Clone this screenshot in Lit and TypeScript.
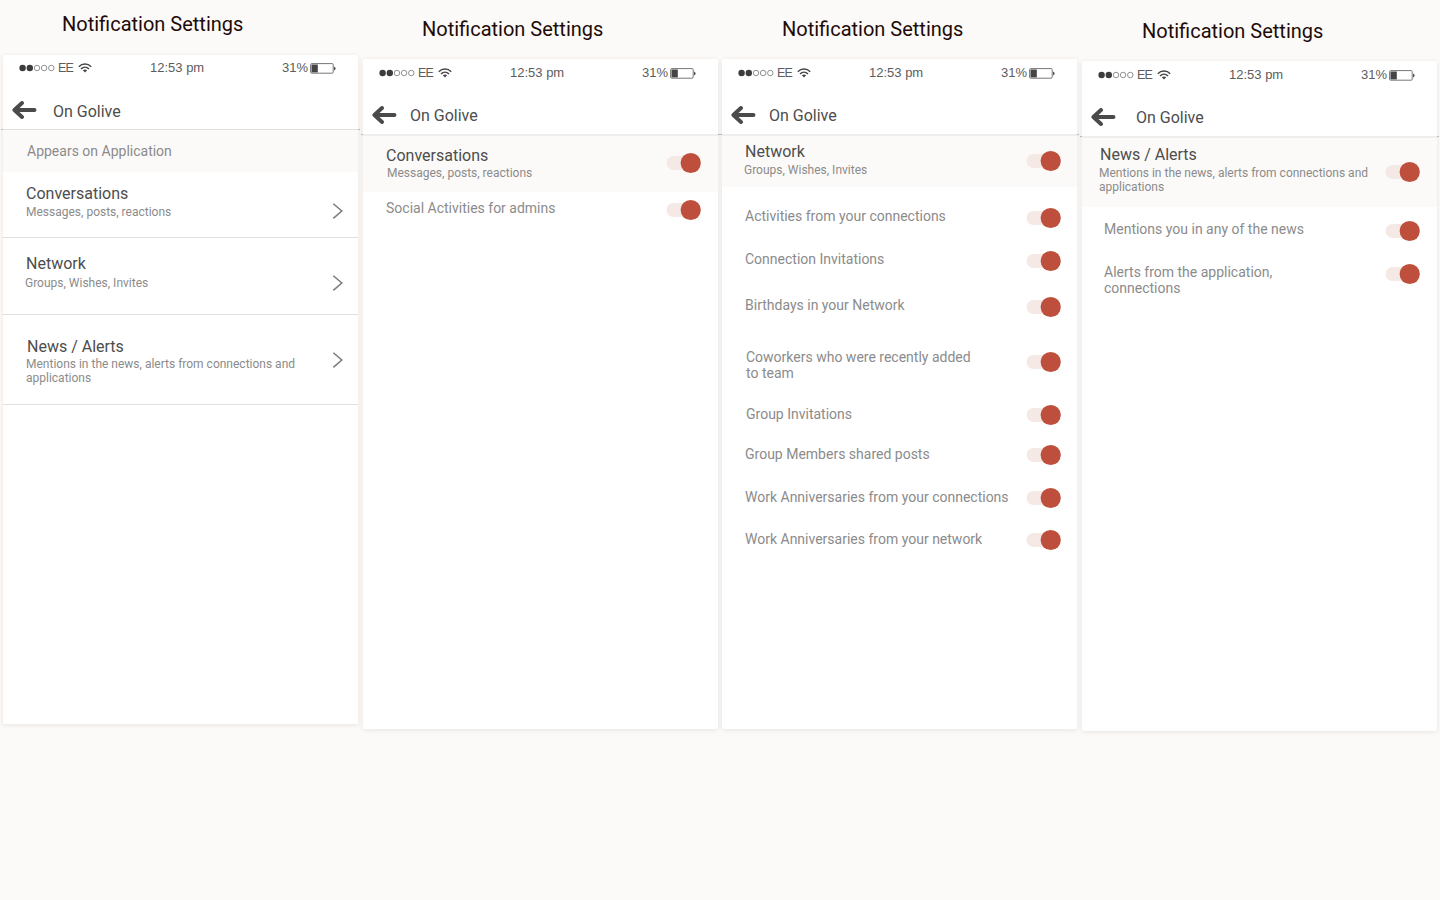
import { LitElement, html, css, svg, nothing } from "lit";
import { customElement, property } from "lit/decorators.js";
import { styleMap } from "lit/directives/style-map.js";
import { classMap } from "lit/directives/class-map.js";

interface Row {
  kind: "section" | "link" | "band" | "item";
  height: number;
  indent: number;
  top: number;
  label: string;
  sub?: string;
  subShift?: number;
  gap?: number;
  control?: number;
}

interface Screen {
  headTop: number;
  headGap: number;
  left: number;
  height: number;
  drop: number;
  rule: number;
  navIndent: number;
  controlRight: number;
  rows: Row[];
}

const SCREENS: Screen[] = [
  {
    headTop: 12, headGap: 19, left: 3, height: 669, drop: 0, rule: 1, navIndent: 50, controlRight: 15,
    rows: [
      { kind: "section", height: 42, indent: 24, top: 13, label: "Appears on Application" },
      { kind: "link", height: 66, indent: 23, top: 12, label: "Conversations", sub: "Messages, posts, reactions", subShift: 0, gap: 2, control: 39.4 },
      { kind: "link", height: 77, indent: 23, top: 16, label: "Network", sub: "Groups, Wishes, Invites", subShift: -1, gap: 3, control: 44.6 },
      { kind: "link", height: 90, indent: 24, top: 22, label: "News / Alerts", sub: "Mentions in the news, alerts from connections and\napplications", subShift: -1, gap: 1, control: 44.6 },
    ],
  },
  {
    headTop: 17, headGap: 18, left: 3, height: 670, drop: 1, rule: 2, navIndent: 47, controlRight: 17,
    rows: [
      { kind: "band", height: 56, indent: 23, top: 10, label: "Conversations", sub: "Messages, posts, reactions", subShift: 1, gap: 1, control: 27.4 },
      { kind: "item", height: 40, indent: 23, top: 8, label: "Social Activities for admins", control: 17.9 },
    ],
  },
  {
    headTop: 17, headGap: 18, left: 2, height: 670, drop: 1, rule: 2, navIndent: 47, controlRight: 16,
    rows: [
      { kind: "band", height: 51, indent: 23, top: 6, label: "Network", sub: "Groups, Wishes, Invites", subShift: -1, gap: 2, control: 25 },
      { kind: "item", height: 52, indent: 23, top: 21, label: "Activities from your connections", control: 30.6 },
      { kind: "item", height: 44, indent: 23, top: 12, label: "Connection Invitations", control: 21.6 },
      { kind: "item", height: 48, indent: 23, top: 14, label: "Birthdays in your Network", control: 23.7 },
      { kind: "item", height: 57, indent: 24, top: 18, label: "Coworkers who were recently added\nto team", control: 31 },
      { kind: "item", height: 46, indent: 24, top: 18, label: "Group Invitations", control: 26.9 },
      { kind: "item", height: 42, indent: 23, top: 12, label: "Group Members shared posts", control: 21 },
      { kind: "item", height: 42, indent: 23, top: 13, label: "Work Anniversaries from your connections", control: 22 },
      { kind: "item", height: 44, indent: 23, top: 13, label: "Work Anniversaries from your network", control: 22 },
    ],
  },
  {
    headTop: 19, headGap: 18, left: 2, height: 670, drop: 1, rule: 2, navIndent: 54, controlRight: 17,
    rows: [
      { kind: "band", height: 69, indent: 18, top: 7, label: "News / Alerts", sub: "Mentions in the news, alerts from connections and\napplications", subShift: -1, gap: 2, control: 34 },
      { kind: "item", height: 42, indent: 22, top: 14, label: "Mentions you in any of the news", control: 23.5 },
      { kind: "item", height: 51, indent: 22, top: 15, label: "Alerts from the application,\nconnections", control: 24.6 },
    ],
  },
];

const px = (n: number) => `${n}px`;

@customElement("status-bar")
class StatusBar extends LitElement {
  static styles = css`
    :host {
      display: grid;
      grid-template-columns: 131px 132px 1fr;
      padding-left: 16px;
      height: 18px;
      font: 13px/18px "Liberation Sans", Arial, sans-serif;
      color: #5c5c5c;
    }
    .cell { display: flex; align-items: center; white-space: nowrap; }
    svg { display: block; flex: none; }
    .dots { margin-right: 3px; }
    .carrier { font-size: 12.5px; letter-spacing: -0.8px; width: 19.5px; }
    .battery { margin-left: 2px; }
  `;

  render() {
    return html`
      <div class="cell">
        <svg class="dots" width="36" height="8" viewBox="0 0 36 8">
          <circle cx="3.6" cy="4" r="3.2" fill="#3c3c3c"></circle>
          <circle cx="10.8" cy="4" r="3.2" fill="#3c3c3c"></circle>
          ${[18, 25.1, 32.3].map((x) => svg`<circle cx=${x} cy="4" r="2.75" fill="none" stroke="#777" stroke-width=".8"></circle>`)}
        </svg>
        <span class="carrier">EE</span>
        <svg width="14" height="10" viewBox="0 0 14 10" fill="none" stroke="#484848" stroke-width="1.5">
          <path d="M.8 3.7C4.2.2 9.8.2 13.2 3.7"></path>
          <path d="M3 6C5.300 3.700 8.700 3.700 11 6"></path>
          <path d="M4.800 7.300Q7 5.500 9.200 7.300L7 9.600Z" fill="#484848" stroke="none"></path>
        </svg>
      </div>
      <div class="cell">12:53 pm</div>
      <div class="cell">
        31%
        <svg class="battery" width="26" height="11" viewBox="0 0 26 11">
          <rect x=".6" y=".6" width="22.600" height="9.600" rx="1" fill="none" stroke="#777" stroke-width="1"></rect>
          <rect x="1.500" y="1.500" width="6.300" height="7.900" fill="#444"></rect>
          <path d="M24 3.500Q25.600 4 25.600 5.500Q25.600 7 24 7.500Z" fill="#555"></path>
        </svg>
      </div>
    `;
  }
}

@customElement("phone-screen")
class PhoneScreen extends LitElement {
  @property({ attribute: false }) screen!: Screen;

  static styles = css`
    :host { display: block; }
    .heading { font-size: 20px; line-height: 24px; color: #210b08; white-space: nowrap; }
    .phone {
      width: 355px;
      background: #fff;
      border-radius: 2px;
      box-shadow: 0 1px 5px rgba(60, 40, 40, 0.11);
    }
    .top { height: 30px; box-sizing: border-box; }
    .nav { display: flex; padding-left: 9px; box-sizing: border-box; }
    .nav svg { display: block; flex: none; }
    .nav-title { padding-top: 17px; font-size: 16px; line-height: 19px; color: #4d4d4d; }
    .rule { display: flex; justify-content: space-between; margin: 0 -2px; background: #e2e1e0; }
    .rule.soft { background: #efeeed; }
    .rule i { width: 2px; height: 1px; background: #bdbbba; }
    .row { display: flex; box-sizing: border-box; }
    .text { flex: 1; white-space: pre; font-size: 14px; line-height: 16px; color: #8b8b8b; }
    .title { font-size: 16px; line-height: 19px; color: #4d4d4d; }
    .sub { font-size: 12px; line-height: 14px; color: #8b8b8b; }
    .section, .band { background: #fbfaf8; }
    .link { border-bottom: 1px solid #dfdfdf; }
    .control { flex: none; }
    .control svg { display: block; }
  `;

  private chevron = html`
    <svg width="11" height="22" viewBox="0 0 11 22"><path d="M1.300 3.700L9.800 11L1.300 18.400" fill="none" stroke="#7b7b7b" stroke-width="1.500"></path></svg>
  `;

  private toggle = html`
    <svg width="35" height="22" viewBox="0 0 35 22">
      <rect x=".5" y="4" width="32" height="14" rx="7" fill="#f5e9e6"></rect>
      <circle cx="24.700" cy="11" r="10.100" fill="#be4f3c"></circle>
    </svg>
  `;

  private row(r: Row) {
    const big = r.sub !== undefined;
    return html`
      <div class=${classMap({ row: true, [r.kind]: true })}
        style=${styleMap({ height: px(r.height), paddingLeft: px(r.indent), paddingRight: px(this.screen.controlRight) })}>
        <div class="text" style=${styleMap({ paddingTop: px(r.top) })}>${big
          ? html`<div class="title">${r.label}</div><div class="sub" style=${styleMap({ marginTop: px(r.gap ?? 0), marginLeft: px(r.subShift ?? 0) })}>${r.sub}</div>`
          : r.label}</div>
        ${r.control === undefined ? nothing : html`<div class="control" style=${styleMap({ paddingTop: px(r.control - 11) })}>${r.kind === "link" ? this.chevron : this.toggle}</div>`}
      </div>
    `;
  }

  render() {
    const s = this.screen;
    return html`
      <div class="heading" style=${styleMap({ padding: `${s.headTop}px 0 ${s.headGap}px 62px` })}>Notification Settings</div>
      <div class="phone" style=${styleMap({ height: px(s.height), marginLeft: px(s.left) })}>
        <div class="top" style=${styleMap({ paddingTop: px(4 + s.drop) })}><status-bar></status-bar></div>
        <div class="nav" style=${styleMap({ height: px(s.rule === 1 ? 44 : 45) })}>
          <svg style=${styleMap({ marginTop: px(15.8 + s.drop), width: px(s.navIndent - 9) })} height="18" viewBox="0 0 ${s.navIndent - 9} 18">
            <path d="M22.500 9H3.500M10 2L2.400 9L10 16" fill="none" stroke="#4a4a4a" stroke-width="3.900" stroke-linecap="round" stroke-linejoin="round"></path>
          </svg>
          <div class="nav-title">On Golive</div>
        </div>
        <div class=${classMap({ rule: true, soft: s.rule === 2 })} style=${styleMap({ height: px(s.rule) })}><i></i><i></i></div>
        ${s.rows.map((r) => this.row(r))}
      </div>
    `;
  }
}

@customElement("app-root")
class AppRoot extends LitElement {
  static styles = css`
    :host {
      display: grid;
      grid-template-columns: repeat(4, 360px);
      width: 1440px;
      height: 900px;
      overflow: hidden;
      background: #fcfaf8;
      font-family: Roboto, sans-serif;
    }
  `;

  render() {
    return SCREENS.map((s) => html`<phone-screen .screen=${s}></phone-screen>`);
  }
}
